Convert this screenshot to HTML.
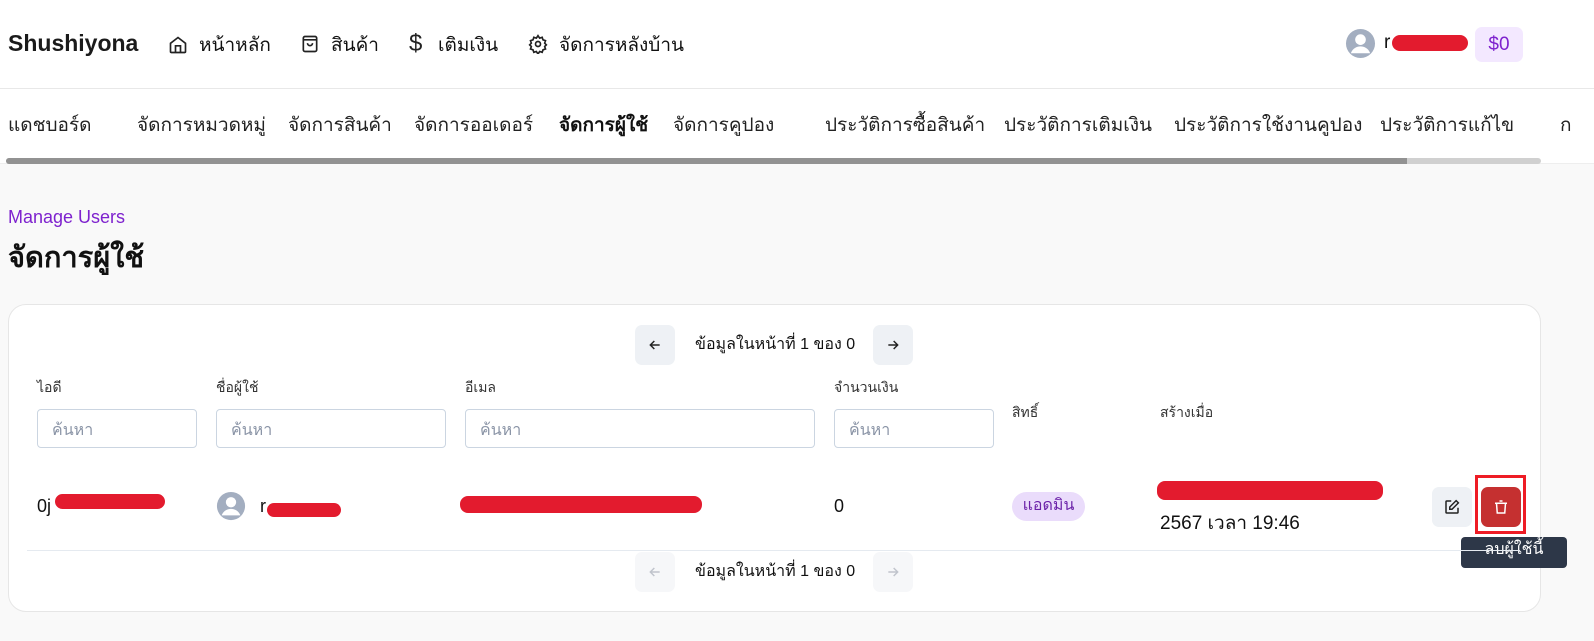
<!DOCTYPE html>
<html><head><meta charset="utf-8">
<style>
*{box-sizing:border-box;margin:0;padding:0}
body{width:1594px;height:641px;overflow:hidden;background:#f9f9f9;font-family:"Liberation Sans",sans-serif;color:#111;position:relative}
.a{position:absolute;white-space:nowrap}
.top{position:absolute;left:0;top:0;width:1594px;height:89px;background:#fff;border-bottom:1px solid #e8e8e8}
.sub{position:absolute;left:0;top:89px;width:1594px;height:75px;background:#fff;border-bottom:1px solid #eee}
.nav{font-size:19px;top:30px}
.tab{font-size:19px;top:110px;color:#222}
.card{position:absolute;left:8px;top:304px;width:1533px;height:308px;background:#fff;border:1px solid #e6e6e6;border-radius:18px}
.lbl{font-size:14px;color:#333}
.inp{position:absolute;height:39px;top:409px;border:1px solid #cbd5e1;border-radius:4px;background:#fff;font-size:16px;color:#8a94a6;padding:8px 14px}
.red{position:absolute;background:#e31b2e;border-radius:8px}
.btn{position:absolute;width:40px;height:40px;border-radius:7px;display:flex;align-items:center;justify-content:center}
</style></head><body>
<div class="top"></div>
<div class="a" style="left:8px;top:30px;font-size:23px;font-weight:bold;color:#1a1a1a">Shushiyona</div>
<svg class="a" style="left:168px;top:35px" width="20" height="20" viewBox="0 0 24 24" fill="none" stroke="#222" stroke-width="2"><path d="M3 10l9-7 9 7v10a1 1 0 0 1-1 1H4a1 1 0 0 1-1-1z"/><path d="M9 21v-8h6v8"/></svg>
<div class="a nav" style="left:199px">หน้าหลัก</div>
<svg class="a" style="left:300px;top:34px" width="20" height="20" viewBox="0 0 24 24" fill="none" stroke="#222" stroke-width="2"><rect x="4" y="3" width="16" height="18" rx="2"/><path d="M4 7h16M9 11a3 3 0 0 0 6 0"/></svg>
<div class="a nav" style="left:331px">สินค้า</div>
<div class="a" style="left:409px;top:30px;font-size:24px;color:#222">$</div>
<div class="a nav" style="left:438px">เติมเงิน</div>
<svg class="a" style="left:528px;top:34px" width="20" height="20" viewBox="0 0 24 24" fill="none" stroke="#222" stroke-width="2"><circle cx="12" cy="12" r="3"/><path d="M12 2l2 3 3-1 1 3 3 1-1 3 2 2-2 2 1 3-3 1-1 3-3-1-2 3-2-3-3 1-1-3-3-1 1-3-2-2 2-2-1-3 3-1 1-3 3 1z"/></svg>
<div class="a nav" style="left:559px">จัดการหลังบ้าน</div>
<svg class="a" style="left:1345px;top:28px" width="31" height="31" viewBox="0 0 32 32"><circle cx="16" cy="16" r="15" fill="#a3aec0"/><circle cx="16" cy="12" r="5.5" fill="#fff"/><path d="M6 26c2-5 6-7 10-7s8 2 10 7" fill="#fff"/></svg>
<div class="a" style="left:1384px;top:32px;font-size:19px">r</div>
<div class="red" style="left:1392px;top:35px;width:76px;height:16px"></div>
<div class="a" style="left:1475px;top:27px;width:48px;height:35px;background:#f3e8ff;border-radius:7px;color:#7e22ce;font-size:19px;text-align:center;line-height:35px">$0</div>

<div class="sub"></div>
<div class="a tab" style="left:8px">แดชบอร์ด</div>
<div class="a tab" style="left:137px">จัดการหมวดหมู่</div>
<div class="a tab" style="left:288px">จัดการสินค้า</div>
<div class="a tab" style="left:414px">จัดการออเดอร์</div>
<div class="a tab" style="left:559px;font-weight:bold;color:#111">จัดการผู้ใช้</div>
<div class="a tab" style="left:673px">จัดการคูปอง</div>
<div class="a tab" style="left:825px">ประวัติการซื้อสินค้า</div>
<div class="a tab" style="left:1004px">ประวัติการเติมเงิน</div>
<div class="a tab" style="left:1174px">ประวัติการใช้งานคูปอง</div>
<div class="a tab" style="left:1380px">ประวัติการแก้ไข</div>
<div class="a tab" style="left:1560px">ก</div>
<div class="a" style="left:6px;top:158px;width:1535px;height:6px;background:#d0d0d0;border-radius:3px"></div>
<div class="a" style="left:6px;top:158px;width:1401px;height:6px;background:#929292;border-radius:3px 0 0 3px"></div>

<div class="a" style="left:8px;top:207px;font-size:18px;color:#7e22ce">Manage Users</div>
<div class="a" style="left:8px;top:234px;font-size:29px;font-weight:bold;color:#111">จัดการผู้ใช้</div>

<div class="card"></div>
<div class="btn" style="left:635px;top:325px;background:#eef1f5"><svg width="16" height="16" viewBox="0 0 24 24" fill="none" stroke="#222" stroke-width="2.2"><path d="M19 12H5M11 6l-6 6 6 6"/></svg></div>
<div class="a" style="left:695px;top:332px;font-size:16px">ข้อมูลในหน้าที่ 1 ของ 0</div>
<div class="btn" style="left:873px;top:325px;background:#eef1f5"><svg width="16" height="16" viewBox="0 0 24 24" fill="none" stroke="#222" stroke-width="2.2"><path d="M5 12h14M13 6l6 6-6 6"/></svg></div>

<div class="a lbl" style="left:37px;top:377px">ไอดี</div>
<div class="a lbl" style="left:216px;top:377px">ชื่อผู้ใช้</div>
<div class="a lbl" style="left:465px;top:377px">อีเมล</div>
<div class="a lbl" style="left:834px;top:377px">จำนวนเงิน</div>
<div class="a lbl" style="left:1012px;top:402px">สิทธิ์</div>
<div class="a lbl" style="left:1160px;top:402px">สร้างเมื่อ</div>
<div class="inp" style="left:37px;width:160px">ค้นหา</div>
<div class="inp" style="left:216px;width:230px">ค้นหา</div>
<div class="inp" style="left:465px;width:350px">ค้นหา</div>
<div class="inp" style="left:834px;width:160px">ค้นหา</div>

<div class="a" style="left:37px;top:496px;font-size:18px">0j</div>
<div class="red" style="left:55px;top:494px;width:110px;height:15px"></div>
<svg class="a" style="left:216px;top:491px" width="30" height="30" viewBox="0 0 32 32"><circle cx="16" cy="16" r="15" fill="#a3aec0"/><circle cx="16" cy="12" r="5.5" fill="#fff"/><path d="M6 26c2-5 6-7 10-7s8 2 10 7" fill="#fff"/></svg>
<div class="a" style="left:260px;top:496px;font-size:18px">r</div>
<div class="red" style="left:267px;top:503px;width:74px;height:14px"></div>
<div class="red" style="left:460px;top:496px;width:242px;height:17px"></div>
<div class="a" style="left:834px;top:496px;font-size:18px">0</div>
<div class="a" style="left:1012px;top:492px;width:73px;height:29px;background:#eadcfb;border-radius:15px;font-size:16px;color:#6b21a8;text-align:center;line-height:27px">แอดมิน</div>
<div class="red" style="left:1157px;top:481px;width:226px;height:19px"></div>
<div class="a" style="left:1160px;top:508px;font-size:19px">2567 เวลา 19:46</div>
<div class="btn" style="left:1432px;top:487px;background:#eef1f5"><svg width="18" height="18" viewBox="0 0 24 24" fill="none" stroke="#222" stroke-width="2"><path d="M11 4H5a1 1 0 0 0-1 1v14a1 1 0 0 0 1 1h14a1 1 0 0 0 1-1v-6"/><path d="M17.5 3.5l3 3L12 15H9v-3z"/></svg></div>
<div class="a" style="left:1475px;top:475px;width:51px;height:59px;border:3px solid #ee1c25"></div>
<div class="btn" style="left:1481px;top:487px;background:#c53030"><svg width="18" height="18" viewBox="0 0 24 24" fill="none" stroke="#fff" stroke-width="2"><path d="M4 7h16M10 4h4M6 7l1 13h10l1-13"/></svg></div>
<div class="a" style="left:1461px;top:537px;width:106px;height:31px;background:#2d3748;border-radius:4px;color:#fff;font-size:16px;text-align:center;line-height:26px">ลบผู้ใช้นี้</div>

<div class="a" style="left:27px;top:550px;width:1493px;height:1px;background:#e5eaf0"></div>
<div class="btn" style="left:635px;top:552px;background:#f6f7f9"><svg width="16" height="16" viewBox="0 0 24 24" fill="none" stroke="#c0c4cc" stroke-width="2.2"><path d="M19 12H5M11 6l-6 6 6 6"/></svg></div>
<div class="a" style="left:695px;top:559px;font-size:16px">ข้อมูลในหน้าที่ 1 ของ 0</div>
<div class="btn" style="left:873px;top:552px;background:#f6f7f9"><svg width="16" height="16" viewBox="0 0 24 24" fill="none" stroke="#c0c4cc" stroke-width="2.2"><path d="M5 12h14M13 6l6 6-6 6"/></svg></div>
</body></html>
